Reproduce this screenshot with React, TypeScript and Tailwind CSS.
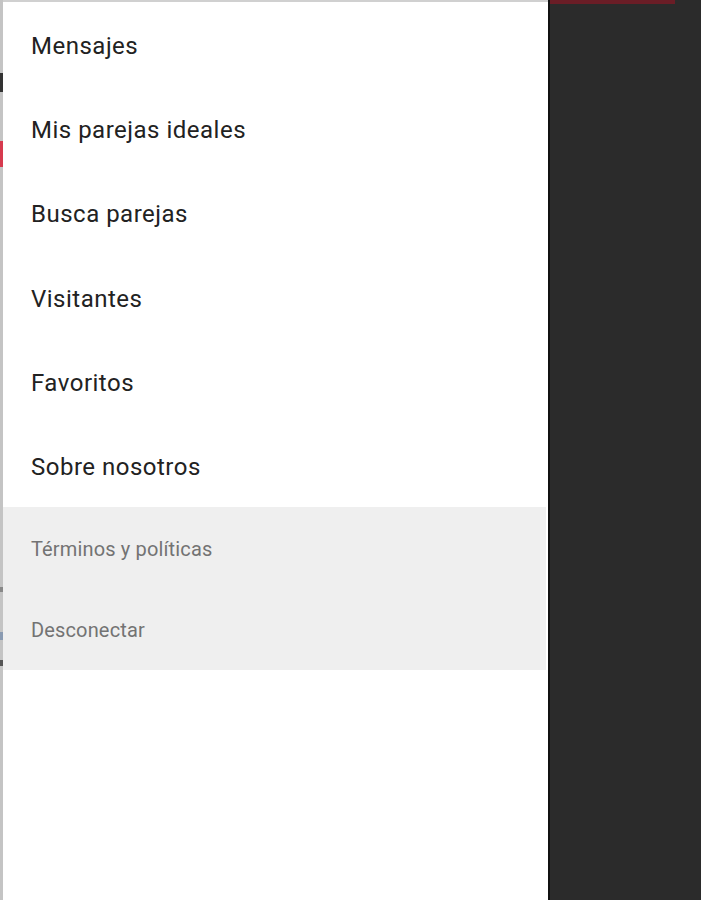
const mainItems = ['Mensajes', 'Mis parejas ideales', 'Busca parejas', 'Visitantes', 'Favoritos', 'Sobre nosotros'];
const footerItems = ['Términos y políticas', 'Desconectar'];

export default function App() {
  return (
    <div className="flex w-[701px] h-[900px] overflow-hidden bg-white" style={{ fontFamily: 'Roboto, "Noto Sans", sans-serif' }}>
      {/* edge of the page underneath the drawer */}
      <div className="flex w-[3px] shrink-0 flex-col bg-[#c4c4c4]">
        <div className="h-[73px]" />
        <div className="h-[19px] bg-[#333]" />
        <div className="h-[49px]" />
        <div className="h-[26px] bg-[#d63a4e]" />
        <div className="h-[420px]" />
        <div className="h-[5px] bg-[#888]" />
        <div className="h-[40px]" />
        <div className="h-[8px] bg-[#8a9bb2]" />
        <div className="h-[20px]" />
        <div className="h-[6px] bg-[#555]" />
      </div>

      {/* drawer */}
      <nav className="flex w-[545px] shrink-0 flex-col border-t-[2px] border-[#d0d0d0] bg-white">
        <div className="h-px" />
        {mainItems.map((item, i) => (
          <div key={item} className={`flex h-[84px] items-center pl-[28px] text-[24px] tracking-[0.5px] text-[#222] ${i > 2 ? 'pt-[4px]' : 'pt-[2px]'}`}>
            {item}
          </div>
        ))}
        <div className="mr-[2px] flex flex-col bg-[#efefef]">
          {footerItems.map(item => (
            <div key={item} className="flex h-[81.5px] items-center pt-[2px] pl-[28px] text-[20px] tracking-[0.15px] text-[#737373]">
              {item}
            </div>
          ))}
        </div>
      </nav>

      {/* dimmed content */}
      <div className="w-[2px] shrink-0 bg-[#111]" />
      <div className="flex flex-1 flex-col bg-[#2b2b2b]">
        <div className="h-[4px] w-[125px] bg-[#6a1d26]" />
      </div>
    </div>
  );
}
